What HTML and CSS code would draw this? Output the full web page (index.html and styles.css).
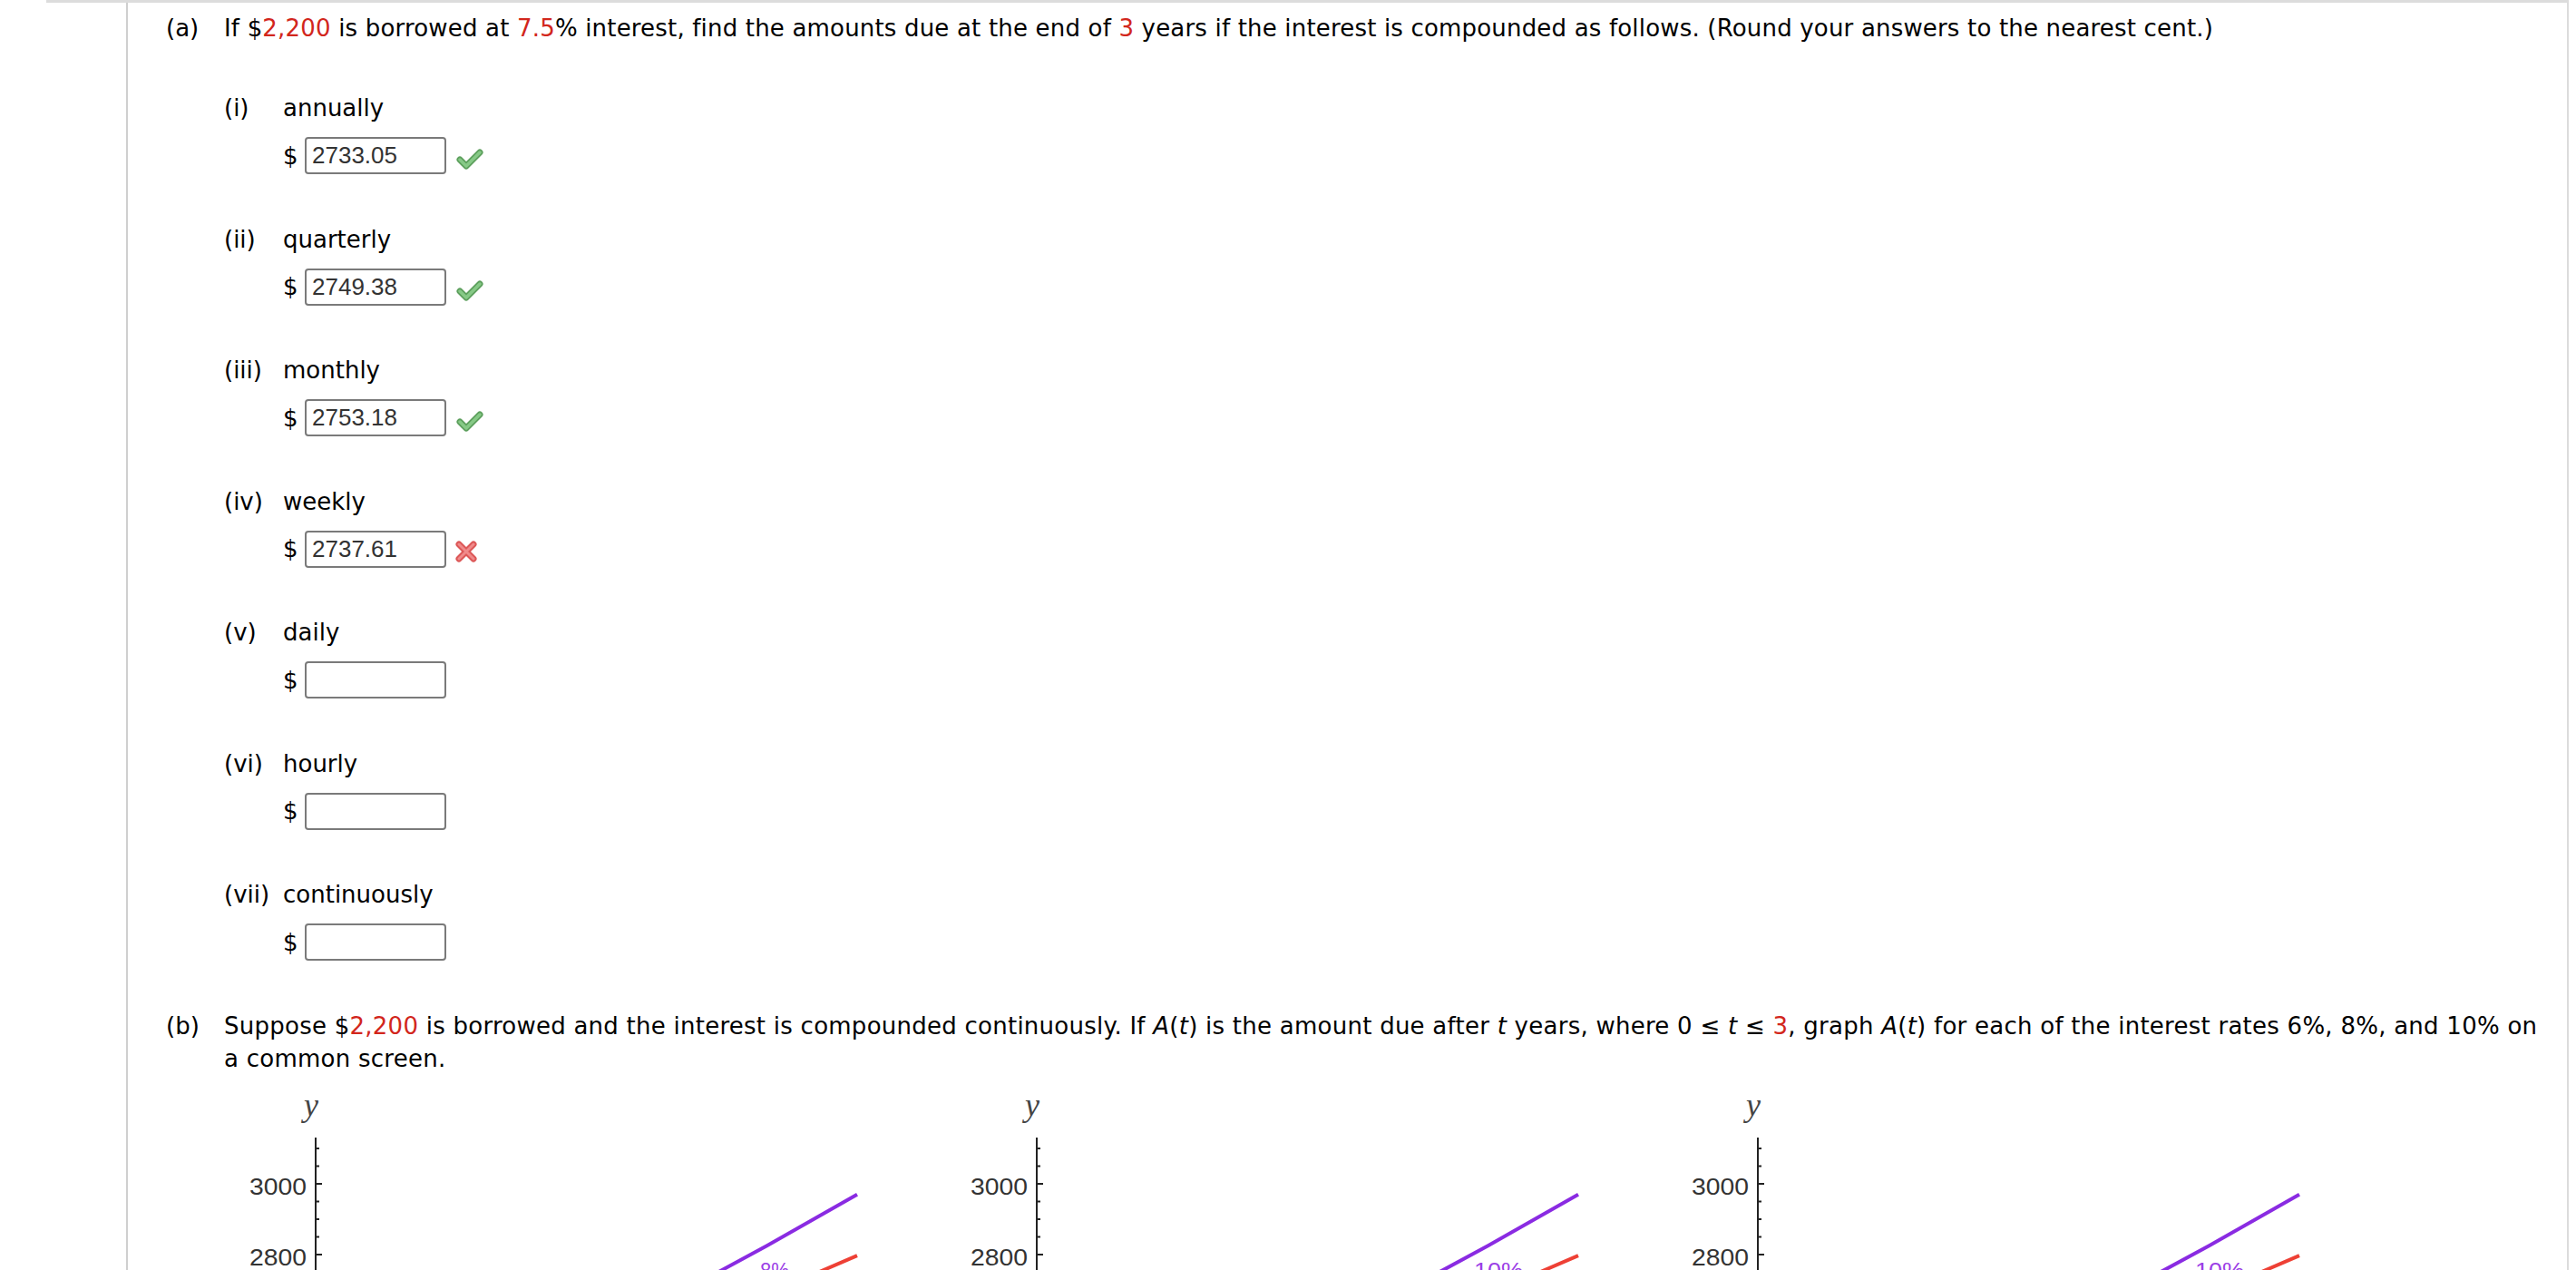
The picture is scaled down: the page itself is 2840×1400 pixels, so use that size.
FILE: index.html
```html
<!DOCTYPE html>
<html lang="en">
<head>
<meta charset="utf-8">
<title>Compound interest</title>
<link rel="stylesheet" href="styles.css">
</head>
<body>
<div class="question">
  <div class="qnum"></div>
  <div class="qbody">
    <div class="part">
      <div class="plabel">(a)</div>
      <div class="ptext">
        <p class="prompt prompt-a">If $<span class="red">2,200</span> is borrowed at <span class="red">7.5</span>% interest, find the amounts due at the end of <span class="red">3</span> years if the interest is compounded as follows. (Round your answers to the nearest cent.)</p>
        <ol class="items">
          <li class="item">
            <div class="item-head"><span class="ilabel">(i)</span><span>annually</span></div>
            <div class="answer"><span class="dollar">$</span><input class="field" type="text" value="2733.05">
              <svg class="mark check" viewBox="0 0 30 24"><path class="ck-out" d="M4 13 L11 20 L26 5"/><path class="ck-in" d="M4 13 L11 20 L26 5"/></svg></div>
          </li>
          <li class="item">
            <div class="item-head"><span class="ilabel">(ii)</span><span>quarterly</span></div>
            <div class="answer"><span class="dollar">$</span><input class="field" type="text" value="2749.38">
              <svg class="mark check" viewBox="0 0 30 24"><path class="ck-out" d="M4 13 L11 20 L26 5"/><path class="ck-in" d="M4 13 L11 20 L26 5"/></svg></div>
          </li>
          <li class="item">
            <div class="item-head"><span class="ilabel">(iii)</span><span>monthly</span></div>
            <div class="answer"><span class="dollar">$</span><input class="field" type="text" value="2753.18">
              <svg class="mark check" viewBox="0 0 30 24"><path class="ck-out" d="M4 13 L11 20 L26 5"/><path class="ck-in" d="M4 13 L11 20 L26 5"/></svg></div>
          </li>
          <li class="item">
            <div class="item-head"><span class="ilabel">(iv)</span><span>weekly</span></div>
            <div class="answer"><span class="dollar">$</span><input class="field" type="text" value="2737.61">
              <svg class="mark cross" viewBox="0 0 26 26"><path class="x-out" d="M5 5 L21 21 M21 5 L5 21"/><path class="x-in" d="M5 5 L21 21 M21 5 L5 21"/></svg></div>
          </li>
          <li class="item">
            <div class="item-head"><span class="ilabel">(v)</span><span>daily</span></div>
            <div class="answer"><span class="dollar">$</span><input class="field" type="text" value=""></div>
          </li>
          <li class="item">
            <div class="item-head"><span class="ilabel">(vi)</span><span>hourly</span></div>
            <div class="answer"><span class="dollar">$</span><input class="field" type="text" value=""></div>
          </li>
          <li class="item">
            <div class="item-head"><span class="ilabel">(vii)</span><span>continuously</span></div>
            <div class="answer"><span class="dollar">$</span><input class="field" type="text" value=""></div>
          </li>
        </ol>
      </div>
    </div>
    <div class="part">
      <div class="plabel">(b)</div>
      <div class="ptext">
        <p class="prompt">Suppose $<span class="red">2,200</span> is borrowed and the interest is compounded continuously. If <i>A</i>(<i>t</i>) is the amount due after <i>t</i> years, where 0 ≤ <i>t</i> ≤ <span class="red">3</span>, graph <i>A</i>(<i>t</i>) for each of the interest rates 6%, 8%, and 10% on<br>a common screen.</p>
        <div class="graphs">
          <svg class="graph" viewBox="0 0 795 560">
            <text class="ylab" x="88" y="39">y</text>
            <line class="axis" x1="101" y1="63" x2="101" y2="504"/>
            <path class="tick" d="M101 114h7M101 192h7M101 270h7M101 348h7M101 426h7"/>
            <path class="minor" d="M101 75h4M101 94.5h4M101 133.5h4M101 153h4M101 172.5h4M101 211.5h4M101 231h4M101 250.5h4M101 289.5h4M101 309h4M101 328.5h4M101 367.5h4M101 387h4M101 406.5h4M101 445.5h4M101 465h4M101 484.5h4"/>
            <text class="num" x="91" y="126" textLength="63" lengthAdjust="spacingAndGlyphs">3000</text>
            <text class="num" x="91" y="204" textLength="63" lengthAdjust="spacingAndGlyphs">2800</text>
            <text class="num" x="91" y="282" textLength="63" lengthAdjust="spacingAndGlyphs">2600</text>
            <text class="num" x="91" y="360" textLength="63" lengthAdjust="spacingAndGlyphs">2400</text>
            <text class="num" x="91" y="438" textLength="63" lengthAdjust="spacingAndGlyphs">2200</text>
            <line class="axis" x1="101" y1="504" x2="730" y2="504"/>
            <path class="tick" d="M300 504v-7M499 504v-7M698 504v-7"/>
            <text class="num" x="293" y="534">1</text><text class="num" x="492" y="534">2</text><text class="num" x="691" y="534">3</text>
            <text class="ylab" x="740" y="512">t</text>
            <polyline class="c10" points="101,426 200.5,382 300,335.8 399.5,287.2 499,236.1 598.5,182.3 698,125.8"/>
            <polyline class="c8" points="101,426 200.5,391 300,354.5 399.5,316.6 499,277.1 598.5,236 698,193.2"/>
            <polyline class="c6" points="101,426 200.5,399.9 300,373 399.5,345.2 499,316.6 598.5,287.2 698,256.8"/>
            <text class="lab l10" x="591" y="218" textLength="32" lengthAdjust="spacingAndGlyphs">8%</text>
            <text class="lab l8" x="640" y="262" textLength="50" lengthAdjust="spacingAndGlyphs">10%</text>
            <text class="lab l6" x="640" y="318" textLength="32" lengthAdjust="spacingAndGlyphs">6%</text>
          </svg>
          <svg class="graph" viewBox="0 0 795 560">
            <text class="ylab" x="88" y="39">y</text>
            <line class="axis" x1="101" y1="63" x2="101" y2="504"/>
            <path class="tick" d="M101 114h7M101 192h7M101 270h7M101 348h7M101 426h7"/>
            <path class="minor" d="M101 75h4M101 94.5h4M101 133.5h4M101 153h4M101 172.5h4M101 211.5h4M101 231h4M101 250.5h4M101 289.5h4M101 309h4M101 328.5h4M101 367.5h4M101 387h4M101 406.5h4M101 445.5h4M101 465h4M101 484.5h4"/>
            <text class="num" x="91" y="126" textLength="63" lengthAdjust="spacingAndGlyphs">3000</text>
            <text class="num" x="91" y="204" textLength="63" lengthAdjust="spacingAndGlyphs">2800</text>
            <text class="num" x="91" y="282" textLength="63" lengthAdjust="spacingAndGlyphs">2600</text>
            <text class="num" x="91" y="360" textLength="63" lengthAdjust="spacingAndGlyphs">2400</text>
            <text class="num" x="91" y="438" textLength="63" lengthAdjust="spacingAndGlyphs">2200</text>
            <line class="axis" x1="101" y1="504" x2="730" y2="504"/>
            <path class="tick" d="M300 504v-7M499 504v-7M698 504v-7"/>
            <text class="num" x="293" y="534">1</text><text class="num" x="492" y="534">2</text><text class="num" x="691" y="534">3</text>
            <text class="ylab" x="740" y="512">t</text>
            <polyline class="c10" points="101,426 200.5,382 300,335.8 399.5,287.2 499,236.1 598.5,182.3 698,125.8"/>
            <polyline class="c8" points="101,426 200.5,391 300,354.5 399.5,316.6 499,277.1 598.5,236 698,193.2"/>
            <polyline class="c6" points="101,426 200.5,399.9 300,373 399.5,345.2 499,316.6 598.5,287.2 698,256.8"/>
            <text class="lab l10" x="583" y="218" textLength="54" lengthAdjust="spacingAndGlyphs">10%</text>
            <text class="lab l8" x="640" y="262" textLength="32" lengthAdjust="spacingAndGlyphs">6%</text>
            <text class="lab l6" x="640" y="318" textLength="32" lengthAdjust="spacingAndGlyphs">8%</text>
          </svg>
          <svg class="graph" viewBox="0 0 795 560">
            <text class="ylab" x="88" y="39">y</text>
            <line class="axis" x1="101" y1="63" x2="101" y2="504"/>
            <path class="tick" d="M101 114h7M101 192h7M101 270h7M101 348h7M101 426h7"/>
            <path class="minor" d="M101 75h4M101 94.5h4M101 133.5h4M101 153h4M101 172.5h4M101 211.5h4M101 231h4M101 250.5h4M101 289.5h4M101 309h4M101 328.5h4M101 367.5h4M101 387h4M101 406.5h4M101 445.5h4M101 465h4M101 484.5h4"/>
            <text class="num" x="91" y="126" textLength="63" lengthAdjust="spacingAndGlyphs">3000</text>
            <text class="num" x="91" y="204" textLength="63" lengthAdjust="spacingAndGlyphs">2800</text>
            <text class="num" x="91" y="282" textLength="63" lengthAdjust="spacingAndGlyphs">2600</text>
            <text class="num" x="91" y="360" textLength="63" lengthAdjust="spacingAndGlyphs">2400</text>
            <text class="num" x="91" y="438" textLength="63" lengthAdjust="spacingAndGlyphs">2200</text>
            <line class="axis" x1="101" y1="504" x2="730" y2="504"/>
            <path class="tick" d="M300 504v-7M499 504v-7M698 504v-7"/>
            <text class="num" x="293" y="534">1</text><text class="num" x="492" y="534">2</text><text class="num" x="691" y="534">3</text>
            <text class="ylab" x="740" y="512">t</text>
            <polyline class="c10" points="101,426 200.5,382 300,335.8 399.5,287.2 499,236.1 598.5,182.3 698,125.8"/>
            <polyline class="c8" points="101,426 200.5,391 300,354.5 399.5,316.6 499,277.1 598.5,236 698,193.2"/>
            <polyline class="c6" points="101,426 200.5,399.9 300,373 399.5,345.2 499,316.6 598.5,287.2 698,256.8"/>
            <text class="lab l10" x="583" y="218" textLength="54" lengthAdjust="spacingAndGlyphs">10%</text>
            <text class="lab l8" x="640" y="262" textLength="32" lengthAdjust="spacingAndGlyphs">8%</text>
            <text class="lab l6" x="640" y="318" textLength="32" lengthAdjust="spacingAndGlyphs">6%</text>
          </svg>
        </div>
      </div>
    </div>
  </div>
</div>
</body>
</html>
```

FILE: styles.css
```css
html, body {
  margin: 0;
  padding: 0;
  background: #fff;
}
body {
  font-family: "DejaVu Sans", Verdana, sans-serif;
  font-size: 26px;
  line-height: 36px;
  color: #000;
}
.question {
  margin-left: 51px;
  width: 2781px;
  box-sizing: border-box;
  border-top: 3px solid #dcdcdc;
  border-right: 2px solid #dcdcdc;
  display: grid;
  grid-template-columns: 88px 1fr;
}
.qbody {
  border-left: 2px solid #cfcfcf;
  padding: 10px 0 0 42px;
}
.part {
  display: grid;
  grid-template-columns: 64px 1fr;
}
.prompt {
  margin: 0;
  letter-spacing: 0.25px;
}
.prompt-a {
  letter-spacing: 0.18px;
}
.red {
  color: #d2261c;
}
.items {
  list-style: none;
  margin: 52px 0 0;
  padding: 0;
}
.item {
  margin-bottom: 53.5px;
}
.item-head {
  display: grid;
  grid-template-columns: 65px auto;
}
.answer {
  display: flex;
  align-items: center;
  height: 41px;
  margin-top: 14px;
  padding-left: 65px;
}
.dollar {
  width: 24px;
  flex: none;
}
.field {
  width: 156px;
  height: 41px;
  box-sizing: border-box;
  margin: 0;
  border: 2px solid #7a7a7a;
  border-radius: 4px;
  padding: 0 6px;
  font-family: "Liberation Sans", Arial, sans-serif;
  font-size: 26px;
  color: #333;
  background: #fff;
  outline: none;
}
.mark {
  flex: none;
  margin-left: 11px;
}
.check {
  width: 30px;
  height: 24px;
  margin-top: 7px;
}
.cross {
  width: 26px;
  height: 26px;
  margin-top: 5px;
  margin-left: 9px;
}
.ck-out {
  fill: none;
  stroke: #5c9f5c;
  stroke-width: 7;
  stroke-linecap: round;
  stroke-linejoin: round;
}
.ck-in {
  fill: none;
  stroke: #86c986;
  stroke-width: 3.5;
  stroke-linecap: round;
  stroke-linejoin: round;
}
.x-out {
  fill: none;
  stroke: #dc5757;
  stroke-width: 7;
  stroke-linecap: round;
}
.x-in {
  fill: none;
  stroke: #f08a8a;
  stroke-width: 3;
  stroke-linecap: round;
}
.graphs {
  display: flex;
  margin-top: 6px;
}
.graph {
  flex: none;
  width: 795px;
  height: 560px;
  display: block;
}
.ylab {
  font-family: "Liberation Serif", "Times New Roman", serif;
  font-style: italic;
  font-size: 36px;
  fill: #444;
}
.num {
  font-family: "Liberation Sans", Arial, sans-serif;
  font-size: 26px;
  fill: #333;
  text-anchor: end;
}
.axis {
  stroke: #222;
  stroke-width: 2;
}
.tick {
  stroke: #222;
  stroke-width: 2;
  fill: none;
}
.minor {
  stroke: #222;
  stroke-width: 2;
  fill: none;
}
.c10, .c8, .c6 {
  fill: none;
  stroke-width: 4;
  stroke-linejoin: round;
}
.c10 { stroke: #8a2be2; }
.c8 { stroke: #ee4035; }
.c6 { stroke: #2f6fd6; }
.lab {
  font-family: "Liberation Sans", Arial, sans-serif;
  font-size: 24px;
}
.l10 { fill: #9b3ee6; }
.l8 { fill: #ee4035; }
.l6 { fill: #2f6fd6; }
```
